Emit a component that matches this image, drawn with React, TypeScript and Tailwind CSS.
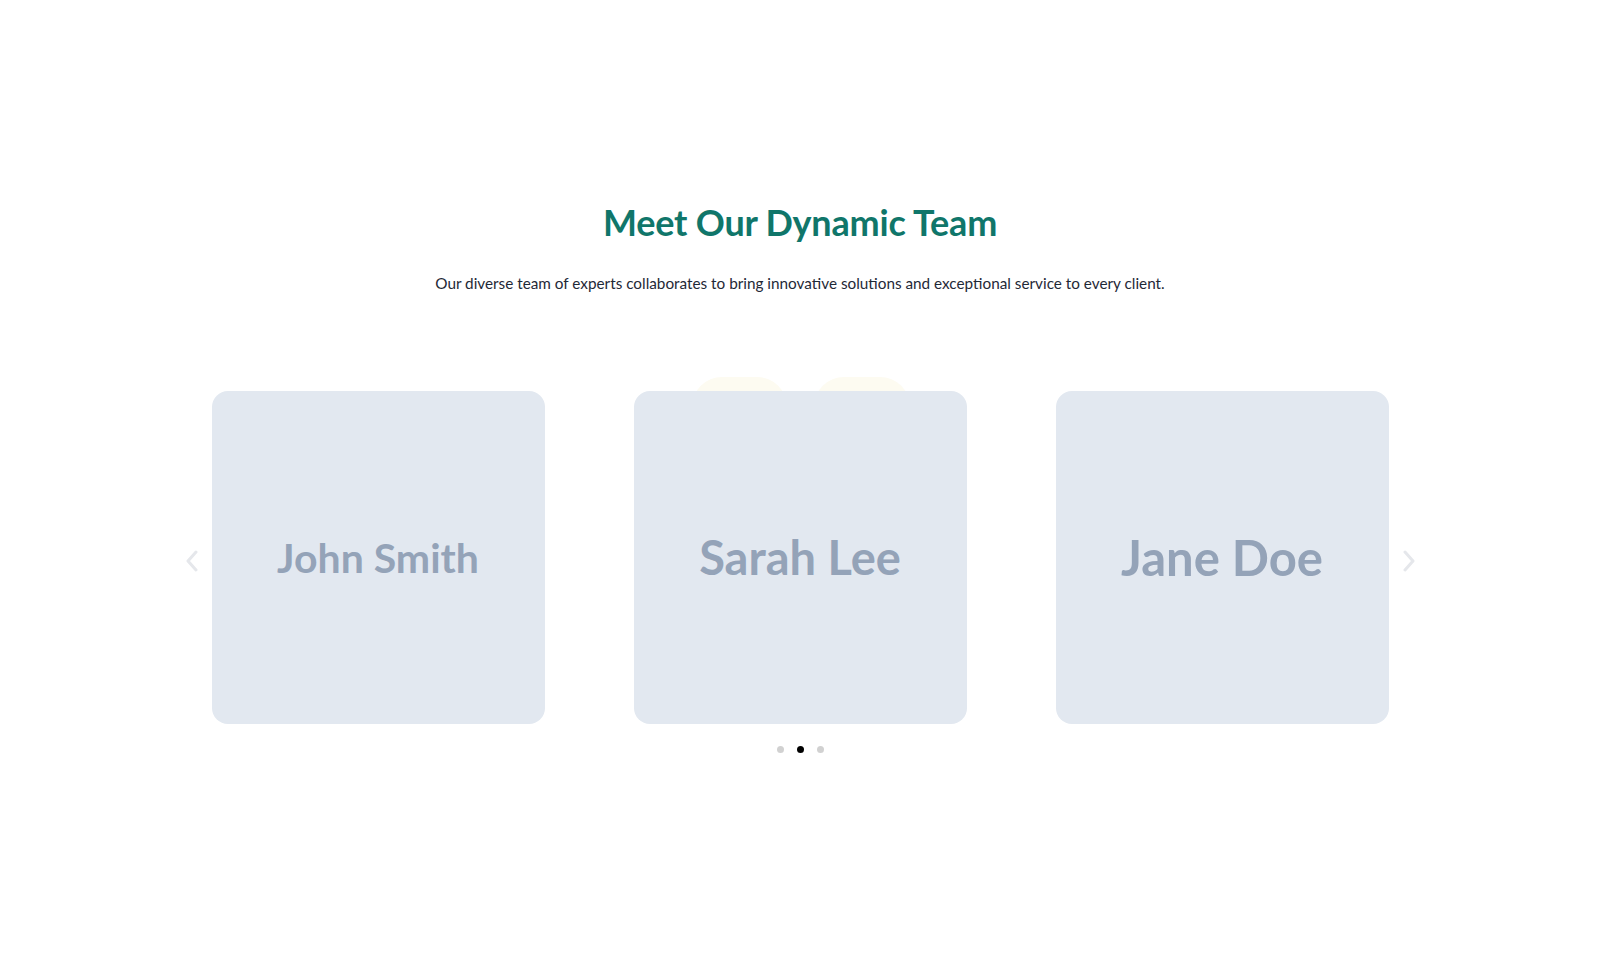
import React from "react";

// Each placeholder name is sized to fill the same width on its card.
const members = [
  { name: "John Smith", size: 41 },
  { name: "Sarah Lee", size: 47 },
  { name: "Jane Doe", size: 49 },
];

function Chevron({ dir }: { dir: "left" | "right" }) {
  return (
    <svg width="12" height="22" viewBox="0 0 12 22" fill="none" className="shrink-0 mt-[7px]">
      <polyline
        points={dir === "left" ? "10,2 2,11 10,20" : "2,2 10,11 2,20"}
        stroke="#e5e7eb"
        strokeWidth="3"
        strokeLinecap="round"
        strokeLinejoin="round"
      />
    </svg>
  );
}

export default function App() {
  return (
    <div className="min-h-screen w-full bg-white flex flex-col items-center pt-[201px]" style={{ fontFamily: "Lato, 'Open Sans', sans-serif" }}>
      <h2 className="text-[36px] leading-[42px] font-bold text-[#10766a] tracking-[-0.2px]">Meet Our Dynamic Team</h2>
      <p className="mt-[28px] text-[15.3px] leading-[24px] text-[#1f2937]">
        Our diverse team of experts collaborates to bring innovative solutions and exceptional service to every client.
      </p>

      <div className="mt-[96px] flex items-center justify-center">
        <Chevron dir="left" />
        <div className="ml-[14px] mr-[14px] flex gap-[89px]">
          {members.map((m, i) => (
            <div key={m.name} className="relative w-[333px] h-[333px]">
              {i === 1 && (
                <>
                  <div className="absolute left-[58px] top-[-14px] w-[95px] h-[40px] rounded-t-[30px] bg-[#fdfbf1]" />
                  <div className="absolute left-[180px] top-[-14px] w-[96px] h-[40px] rounded-t-[30px] bg-[#fdfbf1]" />
                </>
              )}
              <div className="relative w-full h-full rounded-2xl bg-[#e2e8f0] flex items-center justify-center">
                <span className="leading-none font-bold text-[#94a3b8]" style={{ fontSize: m.size }}>
                  {m.name}
                </span>
              </div>
            </div>
          ))}
        </div>
        <Chevron dir="right" />
      </div>

      <div className="mt-[22px] flex gap-[13px]">
        <span className="w-[7px] h-[7px] rounded-full bg-[#d1d1d1]" />
        <span className="w-[7px] h-[7px] rounded-full bg-black" />
        <span className="w-[7px] h-[7px] rounded-full bg-[#d1d1d1]" />
      </div>
    </div>
  );
}
